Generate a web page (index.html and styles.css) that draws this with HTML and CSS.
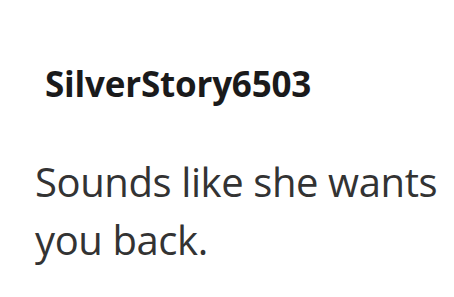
FILE: index.html
```html
<!DOCTYPE html>
<html lang="en">
<head>
  <meta charset="UTF-8" />
  <meta name="viewport" content="width=device-width, initial-scale=1.0" />
  <title>Comment</title>
  <link rel="stylesheet" href="styles.css">
</head>
<body>
  <div class="comment">
    <div class="author">SilverStory6503</div>
    <p class="text">Sounds like she wants you back.</p>
  </div>
</body>
</html>
```

FILE: styles.css
```css
body {
  margin: 0;
  background: #fff;
  font-family: "Open Sans", "Noto Sans", sans-serif;
}
.comment {
  padding: 62px 6px 0 35px;
}
.author {
  padding-left: 10px;
  font-size: 35px;
  font-weight: bold;
  line-height: 44px;
  letter-spacing: -0.2px;
  color: #1a1a1b;
}
.text {
  margin: 47px 0 0;
  font-size: 40px;
  line-height: 58px;
  letter-spacing: -0.4px;
  color: #333;
}
```
